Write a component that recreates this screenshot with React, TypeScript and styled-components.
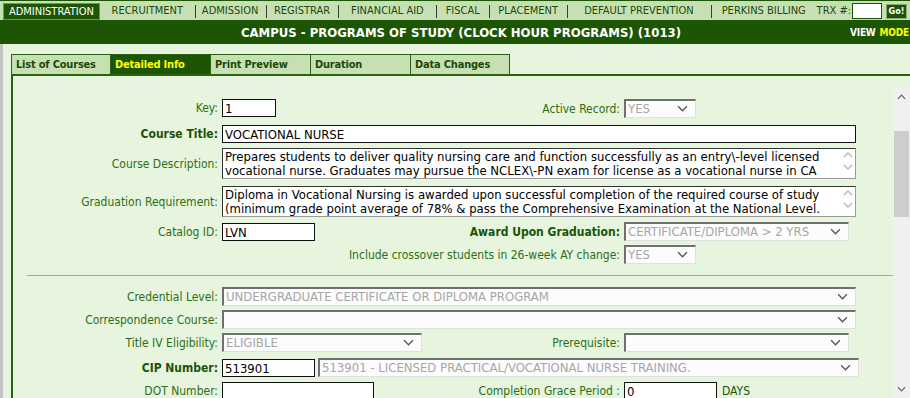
import styled, { createGlobalStyle } from 'styled-components';

const GlobalStyle = createGlobalStyle`
  html, body {
    margin: 0;
    padding: 0;
    background: #e7f5df;
    overflow: hidden;
  }
  body {
    font-family: 'DejaVu Sans Condensed', 'DejaVu Sans', sans-serif;
    font-stretch: semi-condensed;
  }
`;

const Page = styled.div`
  width: 910px;
  height: 398px;
  overflow: hidden;
  background: #e7f5df;
`;

const MenuBar = styled.div`
  display: flex;
  align-items: center;
  height: 19px;
  padding: 0 3px;
  border-top: 1px solid #1c5604;
  background: #c6e0b4;
  white-space: nowrap;
`;

const MenuItem = styled.div<{ w: number; active?: boolean; sep?: boolean }>`
  position: relative;
  width: ${({ w }) => w}px;
  height: 17px;
  line-height: 16px;
  margin-top: 1px;
  box-sizing: border-box;
  text-align: center;
  font-size: 11px;
  color: ${({ active }) => (active ? '#ffffff' : '#1c4a08')};
  background: ${({ active }) => (active ? '#1c5604' : 'transparent')};
  border: ${({ active }) => (active ? '1px solid #6a9858' : 'none')};
  white-space: nowrap;
  &::before {
    content: '';
    display: ${({ sep }) => (sep ? 'block' : 'none')};
    position: absolute;
    left: 0;
    top: 2px;
    width: 1px;
    height: 13px;
    background: #3a3a3a;
  }
`;

const TrxLabel = styled.span`
  font-size: 11px;
  color: #1c4a08;
  margin-right: 1px;
`;

const TrxInput = styled.div`
  width: 28px;
  height: 14px;
  background: #fff;
  border: 1px solid #1c5604;
`;

const GoButton = styled.div`
  margin-left: 4px;
  margin-top: 2px;
  width: 21px;
  height: 15px;
  line-height: 13px;
  box-sizing: border-box;
  background: #1c5604;
  border: 1px solid #8aa87c;
  color: #fff;
  font-size: 9px;
  font-weight: bold;
  text-align: center;
`;

const TitleBar = styled.div`
  position: relative;
  height: 24px;
  line-height: 25px;
  padding-left: 12px;
  background: #1c5604;
  color: #fff;
  font-size: 13px;
  font-weight: bold;
  text-align: center;
`;

const ModeTag = styled.div`
  position: absolute;
  top: 0;
  left: 850px;
  font-size: 10px;
  letter-spacing: -0.2px;
  font-weight: bold;
  white-space: nowrap;
`;

const Yellow = styled.span`
  color: #ffff00;
  margin-left: 4px;
`;

const Body = styled.div`
  border-left: 3px solid #c4c4c4;
  padding: 10px 0 0 8px;
`;

const TabStrip = styled.div`
  display: flex;
`;

const Tab = styled.div<{ active?: boolean; w: number }>`
  width: ${({ w }) => w}px;
  height: 20px;
  line-height: 20px;
  box-sizing: border-box;
  padding-left: 4px;
  margin-right: -1px;
  border: 1px solid #2a6212;
  border-bottom: none;
  background: ${({ active }) => (active ? '#1c5604' : '#c6e0b4')};
  color: ${({ active }) => (active ? '#ffff00' : '#1c4a08')};
  font-size: 11px;
  letter-spacing: -0.2px;
  font-weight: bold;
  white-space: nowrap;
`;

const Panel = styled.div`
  border-left: 2px solid #2a6212;
  border-top: 2px solid #2a6212;
  padding-top: 10px;
`;

const ScrollArea = styled.div`
  display: flex;
  height: 314px;
`;

const Content = styled.div`
  flex: 1;
  overflow: hidden;
`;

const Form = styled.div`
  display: grid;
  grid-template-columns: 205px 200px 194px 1fr;
  grid-template-rows: 26px 23px 38px 36px 23px 24px 18px 23px 23px 25px 24px 24px;
  column-gap: 4px;
  align-items: start;
  padding-top: 13px;
`;

const Label = styled.div<{ strong?: boolean; span?: number; h?: number }>`
  grid-column: ${({ span }) => (span ? `1 / ${span + 1}` : 'auto')};
  height: ${({ h }) => h ?? 18}px;
  display: flex;
  align-items: center;
  justify-content: flex-end;
  font-size: 12px;
  white-space: nowrap;
  color: ${({ strong }) => (strong ? '#1a5406' : '#2c6e14')};
  font-weight: ${({ strong }) => (strong ? 'bold' : 'normal')};
`;

const Wide = styled.div`
  grid-column: 2 / 5;
  display: flex;
  align-items: center;
  gap: 3px;
`;

const Cell = styled.div<{ top?: number }>`
  display: flex;
  align-items: center;
  gap: 5px;
  padding-top: ${({ top }) => top ?? 0}px;
`;

const TextInput = styled.div<{ w: number }>`
  width: ${({ w }) => w}px;
  height: 18px;
  line-height: 17px;
  box-sizing: border-box;
  padding-left: 2px;
  background: #fff;
  border: 1px solid #111;
  font-size: 13px;
  color: #000;
  white-space: nowrap;
  overflow: hidden;
`;

const TextArea = styled.div`
  position: relative;
  width: 634px;
  height: 31px;
  box-sizing: border-box;
  padding: 1px 20px 0 2px;
  background: #fff;
  border: 1px solid #333;
  border-right-color: #9a9a9a;
  border-bottom-color: #9a9a9a;
  font-size: 13px;
  line-height: 14px;
  color: #000;
  white-space: nowrap;
  overflow: hidden;
`;

const AreaArrows = styled.div`
  position: absolute;
  right: 2px;
  top: 3px;
  display: flex;
  flex-direction: column;
  gap: 6px;
`;

const Select = styled.div<{ w: number }>`
  position: relative;
  width: ${({ w }) => w}px;
  height: 19px;
  line-height: 16px;
  box-sizing: border-box;
  padding-left: 2px;
  background: #fcfcfc;
  border-style: solid;
  border-width: 2px 1px 1px 2px;
  border-color: #707070 #e0e0e0 #e0e0e0 #707070;
  font-size: 13px;
  color: #a6a6a6;
  white-space: nowrap;
  overflow: hidden;
`;

const Chevron = styled.svg`
  position: absolute;
  right: 7px;
  top: 4px;
`;

const Divider = styled.div`
  grid-column: 1 / -1;
  margin: 6px 0 0 14px;
  height: 1px;
  background: #a0a8a0;
`;

const Days = styled.span`
  font-size: 12px;
  color: #1a5406;
`;

const Scrollbar = styled.div`
  width: 17px;
  background: #f0f0f0;
  display: flex;
  flex-direction: column;
  align-items: center;
  padding-top: 8px;
  box-sizing: border-box;
`;

const Thumb = styled.div`
  width: 15px;
  height: 86px;
  margin-top: 31px;
  background: #cdcdcd;
`;

const Spacer = styled.div`
  flex: 1;
`;

const BottomGap = styled.div`
  height: 8px;
`;

const ArrowIcon = ({ up, color = '#606060', size = 9 }: { up?: boolean; color?: string; size?: number }) => (
  <svg width={size} height={Math.round(size / 2) + 1} viewBox="0 0 10 6">
    <polyline
      points={up ? '1,5 5,1 9,5' : '1,1 5,5 9,1'}
      fill="none"
      stroke={color}
      strokeWidth="1.3"
    />
  </svg>
);

const SelectBox = ({ w, value }: { w: number; value?: string }) => (
  <Select w={w}>
    {value}
    <Chevron width="11" height="7" viewBox="0 0 10 6">
      <polyline points="1,1 5,5 9,1" fill="none" stroke="#555" strokeWidth="1.2" />
    </Chevron>
  </Select>
);

const Area = ({ lines }: { lines: string[] }) => (
  <TextArea>
    {lines.map((l) => (
      <div key={l}>{l}</div>
    ))}
    <AreaArrows>
      <ArrowIcon up color="#b8b8b8" size={10} />
      <ArrowIcon color="#b8b8b8" size={10} />
    </AreaArrows>
  </TextArea>
);

const menu = [
  { t: 'RECRUITMENT', w: 95 },
  { t: 'ADMISSION', w: 71 },
  { t: 'REGISTRAR', w: 73 },
  { t: 'FINANCIAL AID', w: 98 },
  { t: 'FISCAL', w: 53 },
  { t: 'PLACEMENT', w: 78 },
  { t: 'DEFAULT PREVENTION', w: 144 },
  { t: 'PERKINS BILLING', w: 106 },
];

const tabs = [
  { t: 'List of Courses', w: 100 },
  { t: 'Detailed Info', w: 101, active: true },
  { t: 'Print Preview', w: 101 },
  { t: 'Duration', w: 101 },
  { t: 'Data Changes', w: 100 },
];

const App = () => {
  return (
    <>
      <GlobalStyle />
      <Page>
        <MenuBar>
          <MenuItem w={97} active>
            ADMINISTRATION
          </MenuItem>
          {menu.map((m, i) => (
            <MenuItem key={m.t} w={m.w} sep={i > 0}>
              {m.t}
            </MenuItem>
          ))}
          <TrxLabel>TRX #:</TrxLabel>
          <TrxInput />
          <GoButton>Go!</GoButton>
        </MenuBar>
        <TitleBar>
          CAMPUS - PROGRAMS OF STUDY (CLOCK HOUR PROGRAMS) (1013)
          <ModeTag>
            VIEW<Yellow>MODE</Yellow>
          </ModeTag>
        </TitleBar>
        <Body>
          <TabStrip>
            {tabs.map((t) => (
              <Tab key={t.t} w={t.w} active={t.active}>
                {t.t}
              </Tab>
            ))}
          </TabStrip>
          <Panel>
            <ScrollArea>
              <Content>
                <Form>
                  <Label>Key:</Label>
                  <TextInput w={54}>1</TextInput>
                  <Label h={19}>Active Record:</Label>
                  <SelectBox w={72} value="YES" />

                  <Label strong>Course Title:</Label>
                  <Wide>
                    <TextInput w={634}>VOCATIONAL NURSE</TextInput>
                  </Wide>

                  <Label h={31}>Course Description:</Label>
                  <Wide>
                    <Area
                      lines={[
                        'Prepares students to deliver quality nursing care and function successfully as an entry\\-level licensed',
                        'vocational nurse.  Graduates may pursue the NCLEX\\-PN exam for license as a vocational nurse in CA',
                      ]}
                    />
                  </Wide>

                  <Label h={31}>Graduation Requirement:</Label>
                  <Wide>
                    <Area
                      lines={[
                        'Diploma in Vocational Nursing is awarded upon successful completion of the required course of study',
                        '(minimum grade point average of 78% & pass the Comprehensive Examination at the National Level.',
                      ]}
                    />
                  </Wide>

                  <Label h={20}>Catalog ID:</Label>
                  <Cell top={1}>
                    <TextInput w={93}>LVN</TextInput>
                  </Cell>
                  <Label strong h={19}>
                    Award Upon Graduation:
                  </Label>
                  <SelectBox w={225} value="CERTIFICATE/DIPLOMA > 2 YRS" />

                  <Label span={3} h={19}>
                    Include crossover students in 26-week AY change:
                  </Label>
                  <SelectBox w={72} value="YES" />

                  <Divider />

                  <Label h={19}>Credential Level:</Label>
                  <Wide>
                    <SelectBox w={634} value="UNDERGRADUATE CERTIFICATE OR DIPLOMA PROGRAM" />
                  </Wide>

                  <Label h={19}>Correspondence Course:</Label>
                  <Wide>
                    <SelectBox w={634} />
                  </Wide>

                  <Label h={19}>Title IV Eligibility:</Label>
                  <Cell>
                    <SelectBox w={225} value="ELIGIBLE" />
                  </Cell>
                  <Label h={19}>Prerequisite:</Label>
                  <SelectBox w={225} />

                  <Label strong h={19}>
                    CIP Number:
                  </Label>
                  <Wide>
                    <TextInput w={93}>513901</TextInput>
                    <SelectBox w={541} value="513901 - LICENSED PRACTICAL/VOCATIONAL NURSE TRAINING." />
                  </Wide>

                  <Label>DOT Number:</Label>
                  <TextInput w={152} />
                  <Label>Completion Grace Period :</Label>
                  <Cell>
                    <TextInput w={93}>0</TextInput>
                    <Days>DAYS</Days>
                  </Cell>
                </Form>
              </Content>
              <Scrollbar>
                <ArrowIcon up />
                <Thumb />
                <Spacer />
                <ArrowIcon />
                <BottomGap />
              </Scrollbar>
            </ScrollArea>
          </Panel>
        </Body>
      </Page>
    </>
  );
};

export default App;
